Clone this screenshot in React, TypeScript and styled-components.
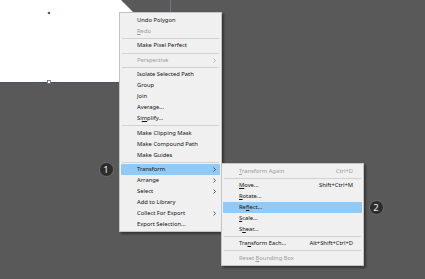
import React from 'react';
import styled, {createGlobalStyle} from 'styled-components';

const GlobalStyle = createGlobalStyle`
  html, body {
    margin: 0;
    padding: 0;
    background: #595959;
  }
`;

const Canvas = styled.div`
  position: relative;
  width: 425px;
  height: 279px;
  overflow: hidden;
  background: #595959;
  font-family: "Noto Sans", "Liberation Sans", sans-serif;
`;

const Artwork = styled.svg`
  display: block;
`;

const Menu = styled.div<{ left: number, top: number, width: number, padTop: number }>`
  position: absolute;
  left: ${props => props.left}px;
  top: ${props => props.top}px;
  width: ${props => props.width}px;
  box-sizing: border-box;
  background: #f0f0f0;
  border: 1px solid #c4c4c4;
  box-shadow: 2px 2px 2px rgba(0, 0, 0, 0.4);
  padding: ${props => props.padTop}px 0 1px;
  display: flex;
  flex-direction: column;
`;

const Item = styled.div<{ active?: boolean, disabled?: boolean, indent: number, rightPad: number }>`
  display: flex;
  align-items: center;
  height: 11px;
  margin: 0 1px;
  padding: 0 ${props => props.rightPad}px 0 ${props => props.indent}px;
  background: ${props => props.active ? '#91c9f7' : 'transparent'};
  color: ${props => props.disabled ? '#9b9b9b' : '#111'};
  font-size: 5.8px;
  white-space: nowrap;
  line-height: 11px;

  u {
    text-decoration-thickness: 0.5px;
    text-underline-offset: 0.6px;
  }
`;

const Label = styled.span`
  flex: 1;
`;

const Shortcut = styled.span`
  text-align: right;
`;

const Separator = styled.div`
  height: 3.4px;
  display: flex;
  align-items: center;
  margin: 0 2px;

  &::after {
    content: '';
    flex: 1;
    height: 1px;
    background: #d2d2d2;
  }
`;

const Arrow = styled.svg<{ disabled?: boolean }>`
  width: 3px;
  height: 5px;
  stroke: ${props => props.disabled ? '#a8a8a8' : '#333'};
  fill: none;
`;

const Badge = styled.div<{ x: number, y: number }>`
  position: absolute;
  left: ${props => props.x - 7.5}px;
  top: ${props => props.y - 7.5}px;
  width: 15px;
  height: 15px;
  box-sizing: border-box;
  border-radius: 50%;
  background: #2c2c2c;
  border: 1px solid #6c6c6c;
  color: #eee;
  font-size: 9.5px;
  display: flex;
  align-items: center;
  justify-content: center;
`;

type Entry = { label: React.ReactNode, disabled?: boolean, sub?: boolean, active?: boolean, key?: string } | 'sep';

const mainItems: Entry[] = [
  {label: 'Undo Polygon'},
  {label: <><u>R</u>edo</>, disabled: true},
  'sep',
  {label: 'Make Pixel Perfect'},
  'sep',
  {label: 'Perspective', disabled: true, sub: true},
  'sep',
  {label: 'Isolate Selected Path'},
  {label: 'Group'},
  {label: 'Join'},
  {label: 'Average...'},
  {label: <>Si<u>m</u>plify...</>},
  'sep',
  {label: 'Make Clipping Mask'},
  {label: 'Make Compound Path'},
  {label: 'Make Guides'},
  'sep',
  {label: 'Transform', sub: true, active: true},
  {label: 'Arrange', sub: true},
  {label: 'Select', sub: true},
  {label: 'Add to Library'},
  {label: 'Collect For Export', sub: true},
  {label: 'Export Selection...'},
];

const subItems: Entry[] = [
  {label: <><u>T</u>ransform Again</>, key: 'Ctrl+D', disabled: true},
  'sep',
  {label: <><u>M</u>ove...</>, key: 'Shift+Ctrl+M'},
  {label: <><u>R</u>otate...</>},
  {label: <>Re<u>f</u>lect...</>, active: true},
  {label: <><u>S</u>cale...</>},
  {label: <>S<u>h</u>ear...</>},
  'sep',
  {label: <>Tra<u>n</u>sform Each...</>, key: 'Alt+Shift+Ctrl+D'},
  'sep',
  {label: <>Reset <u>B</u>ounding Box</>, disabled: true},
];

function MenuList({items, indent, rightPad}: { items: Entry[], indent: number, rightPad: number }) {
  return (
    <>
      {items.map((item, i) => item === 'sep' ? (
        <Separator key={i}/>
      ) : (
        <Item key={i} active={item.active} disabled={item.disabled} indent={indent} rightPad={rightPad}>
          <Label>{item.label}</Label>
          {item.key && <Shortcut>{item.key}</Shortcut>}
          {item.sub && (
            <Arrow viewBox="0 0 3 5" disabled={item.disabled}>
              <path d="M0.5 0.5 L2.5 2.5 L0.5 4.5" strokeWidth="0.8"/>
            </Arrow>
          )}
        </Item>
      ))}
    </>
  );
}

export default function App() {
  return (
    <>
      <GlobalStyle/>
      <Canvas>
        <Artwork width="425" height="279" viewBox="0 0 425 279">
          <polygon points="0,0 121,0 203,82 0,82" fill="#ffffff"/>
          <line x1="0" y1="82.5" x2="203" y2="82.5" stroke="#4b4f60" strokeWidth="1"/>
          <line x1="170.5" y1="0" x2="170.5" y2="14" stroke="#74758c" strokeWidth="1"/>
          <circle cx="49" cy="13" r="1.3" fill="#4b5d8c"/>
          <rect x="47.5" y="80.5" width="3" height="3" fill="#fff" stroke="#5a6a95" strokeWidth="0.8"/>
        </Artwork>

        <Menu left={119} top={12} width={103} padTop={2}>
          <MenuList items={mainItems} indent={16} rightPad={4}/>
        </Menu>

        <Menu left={221} top={163} width={143} padTop={1.5}>
          <MenuList items={subItems} indent={16} rightPad={9}/>
        </Menu>

        <Badge x={106} y={169.5}>1</Badge>
        <Badge x={376} y={207}>2</Badge>
      </Canvas>
    </>
  );
}
